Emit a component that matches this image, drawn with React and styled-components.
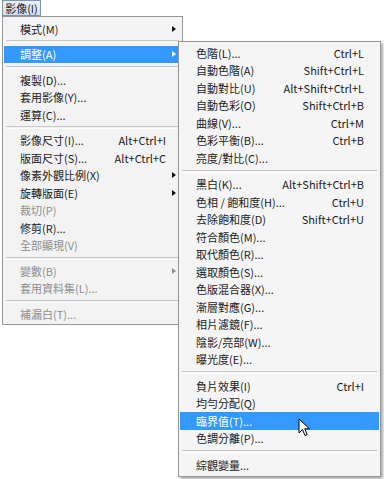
import React from 'react';
import styled, { createGlobalStyle } from 'styled-components';

const Global = createGlobalStyle`
  html, body { margin: 0; padding: 0; background: #ffffff; }
  body {
    font-family: "Noto Sans CJK TC", "Noto Sans", sans-serif;
    font-size: 11px;
    color: #1b1b1b;
  }
`;

const Page = styled.div`
  position: relative;
  width: 384px;
  height: 479px;
  overflow: hidden;
  padding-left: 2px;
  box-sizing: border-box;
`;

const MenuButton = styled.div`
  width: 39px;
  height: 16px;
  box-sizing: border-box;
  border: 1px solid #7d93ad;
  background: linear-gradient(#e9eff6, #d3dde9);
  display: flex;
  align-items: center;
  justify-content: center;
  line-height: 1;
`;

const Menu = styled.div`
  width: ${p => p.$width}px;
  box-sizing: border-box;
  border: 1px solid #979797;
  background: #f3f3f3;
  padding: ${p => p.$pad};
  display: flex;
  flex-direction: column;
`;

const SubMenu = styled(Menu)`
  position: absolute;
  left: 178px;
  top: 41px;
  background: #f5f5f5;
  box-shadow: 2px 2px 3px rgba(0, 0, 0, 0.35);
`;

const Row = styled.div`
  height: 17.5px;
  display: flex;
  align-items: center;
  padding: 0 15px 0 16px;
  background: ${p => (p.$active ? '#3399ff' : 'transparent')};
  color: ${p => (p.$active ? '#ffffff' : p.$disabled ? '#8e8e8e' : '#1b1b1b')};
  white-space: nowrap;
  position: relative;
`;

const Label = styled.span`
  flex: 1;
`;

const Shortcut = styled.span`
  margin-left: 12px;
`;

const Arrow = styled.span`
  position: absolute;
  right: 5px;
  top: 5.5px;
  width: 0;
  height: 0;
  border-top: 3.5px solid transparent;
  border-bottom: 3.5px solid transparent;
  border-left: 4px solid ${p => (p.$active ? '#ffffff' : p.$disabled ? '#8e8e8e' : '#111')};
`;

const Separator = styled.div`
  height: ${p => p.$h}px;
  display: flex;
  align-items: center;
  padding: 0 2px;
  &::after {
    content: '';
    flex: 1;
    height: 1px;
    border-top: 1px solid #c8c8c8;
    border-bottom: 1px solid #ffffff;
  }
`;

const Cursor = styled.svg`
  position: absolute;
  left: 298px;
  top: 418px;
`;

const left = [
  { t: '模式(M)', sub: true },
  '-',
  { t: '調整(A)', sub: true, active: true },
  '-',
  { t: '複製(D)...' },
  { t: '套用影像(Y)...' },
  { t: '運算(C)...' },
  '-',
  { t: '影像尺寸(I)...', k: 'Alt+Ctrl+I' },
  { t: '版面尺寸(S)...', k: 'Alt+Ctrl+C' },
  { t: '像素外觀比例(X)', sub: true },
  { t: '旋轉版面(E)', sub: true },
  { t: '裁切(P)', off: true },
  { t: '修剪(R)...' },
  { t: '全部顯現(V)', off: true },
  '-',
  { t: '變數(B)', sub: true, off: true },
  { t: '套用資料集(L)...', off: true },
  '-',
  { t: '補漏白(T)...', off: true },
];

const adjust = [
  { t: '色階(L)...', k: 'Ctrl+L' },
  { t: '自動色階(A)', k: 'Shift+Ctrl+L' },
  { t: '自動對比(U)', k: 'Alt+Shift+Ctrl+L' },
  { t: '自動色彩(O)', k: 'Shift+Ctrl+B' },
  { t: '曲線(V)...', k: 'Ctrl+M' },
  { t: '色彩平衡(B)...', k: 'Ctrl+B' },
  { t: '亮度/對比(C)...' },
  '-',
  { t: '黑白(K)...', k: 'Alt+Shift+Ctrl+B' },
  { t: '色相 / 飽和度(H)...', k: 'Ctrl+U' },
  { t: '去除飽和度(D)', k: 'Shift+Ctrl+U' },
  { t: '符合顏色(M)...' },
  { t: '取代顏色(R)...' },
  { t: '選取顏色(S)...' },
  { t: '色版混合器(X)...' },
  { t: '漸層對應(G)...' },
  { t: '相片濾鏡(F)...' },
  { t: '陰影/亮部(W)...' },
  { t: '曝光度(E)...' },
  '-',
  { t: '負片效果(I)', k: 'Ctrl+I' },
  { t: '均勻分配(Q)' },
  { t: '臨界值(T)...', active: true },
  { t: '色調分離(P)...' },
  '-',
  { t: '綜觀變量...' },
];

function Items({ list, sep }) {
  return list.map((it, i) =>
    it === '-' ? (
      <Separator key={i} $h={sep} />
    ) : (
      <Row key={i} $active={it.active} $disabled={it.off}>
        <Label>{it.t}</Label>
        {it.k && <Shortcut>{it.k}</Shortcut>}
        {it.sub && <Arrow $active={it.active} $disabled={it.off} />}
      </Row>
    )
  );
}

export default function App() {
  return (
    <Page>
      <Global />
      <MenuButton>影像(I)</MenuButton>
      <Menu $width={181} $pad="3px 1px 1px 1px">
        <Items list={left} sep={8} />
      </Menu>
      <SubMenu $width={203} $pad="2px 1px">
        <Items list={adjust} sep={9} />
      </SubMenu>
      <Cursor width="14" height="20" viewBox="0 0 14 20">
        <path
          d="M1 1 L1 15 L4.5 11.5 L7 17.5 L9.2 16.6 L6.8 10.8 L11.5 10.8 Z"
          fill="#ffffff"
          stroke="#000000"
          strokeWidth="1"
          strokeLinejoin="round"
        />
      </Cursor>
    </Page>
  );
}
